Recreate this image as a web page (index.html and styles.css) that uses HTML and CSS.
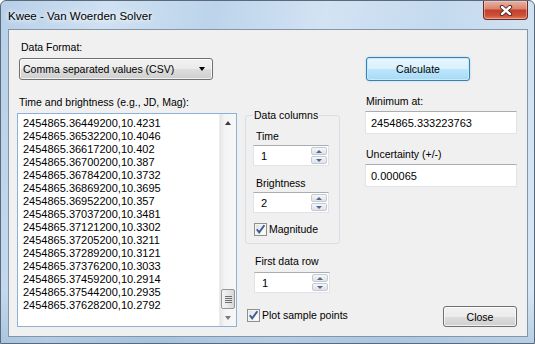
FILE: index.html
```html
<!DOCTYPE html>
<html lang="en">
<head>
    <meta charset="UTF-8">
    <title>Kwee - Van Woerden Solver</title>
    <link rel="stylesheet" href="styles.css">
</head>
<body>
    <div class="window">
        <div class="titlebar">
            <div class="title">Kwee - Van Woerden Solver</div>
            <div class="caption-close">
                <svg width="14" height="11" viewBox="0 0 14 11">
                    <path d="M3 2 L11 9 M11 2 L3 9" stroke="#4a1f1a" stroke-width="4.2" stroke-linecap="round"/>
                    <path d="M3 2 L11 9 M11 2 L3 9" stroke="#ffffff" stroke-width="2.4" stroke-linecap="round"/>
                </svg>
            </div>
        </div>
        <div class="client">
            <div class="col-left">
                <div class="lbl fmt-label">Data Format:</div>
                <div class="combo">
                    <span>Comma separated values (CSV)</span>
                    <span class="combo-arrow"></span>
                </div>
                <div class="lbl data-label">Time and brightness (e.g., JD, Mag):</div>
                <div class="memo">
                    <div class="memo-lines">2454865.36449200,10.4231
2454865.36532200,10.4046
2454865.36617200,10.402
2454865.36700200,10.387
2454865.36784200,10.3732
2454865.36869200,10.3695
2454865.36952200,10.357
2454865.37037200,10.3481
2454865.37121200,10.3302
2454865.37205200,10.3211
2454865.37289200,10.3121
2454865.37376200,10.3033
2454865.37459200,10.2914
2454865.37544200,10.2935
2454865.37628200,10.2792</div>
                    <div class="vscroll">
                        <div class="sb-btn"><span class="sb-up"></span></div>
                        <div class="sb-track">
                            <div class="sb-thumb"><i></i><i></i><i></i><i></i></div>
                        </div>
                        <div class="sb-btn"><span class="sb-down"></span></div>
                    </div>
                </div>
            </div>

            <div class="col-mid">
                <fieldset class="group">
                    <legend class="lbl">Data columns</legend>
                    <div class="lbl group-label first">Time</div>
                    <div class="spin">
                        <span class="spin-val">1</span>
                        <div class="spin-btns">
                            <span class="spin-btn"><i class="arr-up"></i></span>
                            <span class="spin-btn"><i class="arr-down"></i></span>
                        </div>
                    </div>
                    <div class="lbl group-label">Brightness</div>
                    <div class="spin">
                        <span class="spin-val">2</span>
                        <div class="spin-btns">
                            <span class="spin-btn"><i class="arr-up"></i></span>
                            <span class="spin-btn"><i class="arr-down"></i></span>
                        </div>
                    </div>
                    <div class="check-row mag-row">
                        <span class="check">
                            <svg width="11" height="11" viewBox="0 0 11 11"><path d="M1.8 5.2 L4.2 8.4 L9.4 1.2" fill="none" stroke="#3d5a95" stroke-width="1.9"/></svg>
                        </span>
                        <span class="lbl">Magnitude</span>
                    </div>
                </fieldset>

                <div class="lbl row-label">First data row</div>
                <div class="spin row-spin">
                    <span class="spin-val">1</span>
                    <div class="spin-btns">
                        <span class="spin-btn"><i class="arr-up"></i></span>
                        <span class="spin-btn"><i class="arr-down"></i></span>
                    </div>
                </div>

                <div class="check-row plot-row">
                    <span class="check">
                        <svg width="11" height="11" viewBox="0 0 11 11"><path d="M1.8 5.2 L4.2 8.4 L9.4 1.2" fill="none" stroke="#3d5a95" stroke-width="1.9"/></svg>
                    </span>
                    <span class="lbl">Plot sample points</span>
                </div>
            </div>

            <div class="col-right">
                <div class="btn btn-default">Calculate</div>
                <div class="lbl out-label">Minimum at:</div>
                <div class="field">2454865.333223763</div>
                <div class="lbl out-label">Uncertainty (+/-)</div>
                <div class="field">0.000065</div>
                <div class="btn btn-close">Close</div>
            </div>
        </div>
    </div>
</body>
</html>
```

FILE: styles.css
```css
* {
    box-sizing: border-box;
}

body {
    margin: 0;
    font-family: "Liberation Sans", Arial, sans-serif;
    background: #ffffff;
    color: #000000;
}

.window {
    width: 535px;
    height: 344px;
    border: 1px solid #5b6a7b;
    border-radius: 6px 6px 0 0;
    background:
        linear-gradient(180deg, rgba(255, 255, 255, 0) 85%, rgba(120, 160, 200, 0.35) 100%),
        linear-gradient(100deg, #b6cfe8 0%, #cfe1f2 18%, #bcd4eb 36%, #d2e3f3 55%, #c4daee 75%, #d8e7f4 100%);
    display: flex;
    flex-direction: column;
    overflow: hidden;
}

/* title bar */

.titlebar {
    height: 28px;
    display: flex;
    justify-content: space-between;
    align-items: flex-start;
}

.title {
    font-size: 11.5px;
    padding: 9px 0 0 7px;
    text-shadow: 0 0 5px #ffffff, 0 0 9px #ffffff;
}

.caption-close {
    width: 45px;
    height: 19px;
    margin-right: 6px;
    border: 1px solid #6e2a22;
    border-top: none;
    border-radius: 0 0 4px 4px;
    background: linear-gradient(180deg, #eab1a4 0%, #db8670 42%, #c4402a 52%, #cb5138 80%, #dd7d5f 100%);
    box-shadow: inset 0 0 0 1px rgba(255, 220, 210, 0.45);
    display: flex;
    align-items: center;
    justify-content: center;
}

/* client area */

.client {
    flex: 1;
    margin: 0 6px 6px 7px;
    border: 1px solid #8794a4;
    background: #f0f0f0;
    padding-left: 8px;
    display: flex;
}

.lbl {
    font-size: 10.5px;
    line-height: 15px;
    white-space: nowrap;
}

.col-left {
    width: 220px;
    display: flex;
    flex-direction: column;
}

.col-mid {
    width: 95px;
    margin-left: 8px;
    display: flex;
    flex-direction: column;
}

.col-right {
    width: 152px;
    margin-left: 25px;
    display: flex;
    flex-direction: column;
}

.fmt-label {
    margin: 10px 0 0 4px;
}

.combo {
    margin: 3px 0 0 2px;
    width: 194px;
    height: 22px;
    border: 1px solid #707070;
    border-radius: 3px;
    background: linear-gradient(180deg, #f2f2f2 0%, #ebebeb 50%, #dddddd 51%, #cfcfcf 100%);
    box-shadow: inset 0 0 0 1px rgba(255, 255, 255, 0.7);
    font-size: 10.5px;
    padding: 0 7px 0 3px;
    display: flex;
    align-items: center;
    justify-content: space-between;
}

.combo-arrow {
    width: 0;
    height: 0;
    border-left: 3.5px solid transparent;
    border-right: 3.5px solid transparent;
    border-top: 4px solid #000000;
}

.data-label {
    margin: 15px 0 0 2px;
}

.memo {
    margin-top: 3px;
    height: 214px;
    border: 1px solid #8db2da;
    background: #ffffff;
    display: flex;
}

.memo-lines {
    flex: 1;
    padding: 3px 0 0 5px;
    font-size: 11px;
    line-height: 13px;
    white-space: pre;
}

/* scrollbar */

.vscroll {
    width: 17px;
    display: flex;
    flex-direction: column;
    background: linear-gradient(90deg, #e6e6e6 0%, #f4f4f4 30%, #f7f7f7 100%);
    border-left: 1px solid #ececec;
}

.sb-btn {
    height: 17px;
    display: flex;
    align-items: center;
    justify-content: center;
}

.sb-up {
    border-left: 3.5px solid transparent;
    border-right: 3.5px solid transparent;
    border-bottom: 4px solid #3c3c3c;
}

.sb-down {
    border-left: 3.5px solid transparent;
    border-right: 3.5px solid transparent;
    border-top: 4px solid #7a7a7a;
}

.sb-track {
    flex: 1;
    display: flex;
    flex-direction: column;
    justify-content: flex-end;
}

.sb-thumb {
    height: 20px;
    margin: 0 1px;
    border: 1px solid #959595;
    border-radius: 2px;
    background: linear-gradient(90deg, #f3f3f3 0%, #e8e8e8 50%, #d6d6d6 100%);
    display: flex;
    flex-direction: column;
    justify-content: center;
    align-items: center;
    gap: 1px;
}

.sb-thumb i {
    display: block;
    width: 7px;
    height: 1px;
    background: #6d6d6d;
}

/* group box */

.group {
    margin: 78px 0 0 0;
    height: 136px;
    border: 1px solid #d5dfe5;
    border-radius: 3px;
    padding: 0 0 0 7px;
}

.group legend {
    padding: 0 1px;
    margin-left: 0;
}

.group-label {
    margin: 10px 0 0 3px;
}

.group-label.first {
    margin-top: 6px;
}

.spin {
    margin-top: 1px;
    width: 76px;
    height: 21px;
    border: 1px solid #e2e3ea;
    border-top-color: #abadb3;
    background: #ffffff;
    display: flex;
    align-items: stretch;
}

.spin-val {
    flex: 1;
    font-size: 11px;
    padding-left: 7px;
    display: flex;
    align-items: center;
}

.spin-btns {
    width: 17px;
    display: flex;
    flex-direction: column;
    padding: 1px 1px 1px 0;
    gap: 1px;
}

.spin-btn {
    flex: 1;
    border: 1px solid #c5c9d0;
    border-radius: 2px;
    background: linear-gradient(180deg, #f7f8fa 0%, #e9ebef 50%, #dfe2e7 100%);
    display: flex;
    align-items: center;
    justify-content: center;
}

.arr-up {
    border-left: 3px solid transparent;
    border-right: 3px solid transparent;
    border-bottom: 3px solid #4e6a92;
}

.arr-down {
    border-left: 3px solid transparent;
    border-right: 3px solid transparent;
    border-top: 3px solid #4e6a92;
}

.check-row {
    display: flex;
    align-items: center;
    gap: 2px;
    height: 13px;
}

.check {
    width: 13px;
    height: 13px;
    border: 1px solid #8e8f8f;
    background: linear-gradient(135deg, #dcdcdc 0%, #f6f6f6 60%, #ffffff 100%);
    box-shadow: inset 0 0 0 1px #f4f4f4;
    display: flex;
    align-items: center;
    justify-content: center;
}

.mag-row {
    margin-top: 10px;
    margin-left: 1px;
}

.row-label {
    margin: 10px 0 0 10px;
}

.row-spin {
    margin: 3px 0 0 9px;
}

.plot-row {
    margin: 16px 0 0 2px;
}

/* right column */

.btn {
    font-size: 10.5px;
    display: flex;
    align-items: center;
    justify-content: center;
    border-radius: 3px;
}

.btn-default {
    margin: 27px 0 0 1px;
    width: 104px;
    height: 24px;
    border: 1px solid #3c7fb1;
    background: linear-gradient(180deg, #eaf6fd 0%, #d9f0fc 50%, #bee6fd 51%, #a7d9f5 100%);
    box-shadow: inset 0 0 0 1px #c5ecfc, 0 0 2px #9fd2f0;
}

.out-label {
    margin: 13px 0 0 1px;
}

.out-label + .field {
    margin-top: 2px;
}

.field {
    height: 23px;
    border: 1px solid #e2e3ea;
    border-top-color: #abadb3;
    background: #ffffff;
    font-size: 11px;
    padding-left: 5px;
    display: flex;
    align-items: center;
}

.btn-close {
    margin: auto 0 9px 0;
    align-self: flex-end;
    width: 74px;
    height: 21px;
    border: 1px solid #707070;
    background: linear-gradient(180deg, #f2f2f2 0%, #ebebeb 50%, #dddddd 51%, #cfcfcf 100%);
    box-shadow: inset 0 0 0 1px rgba(255, 255, 255, 0.7);
}
```
